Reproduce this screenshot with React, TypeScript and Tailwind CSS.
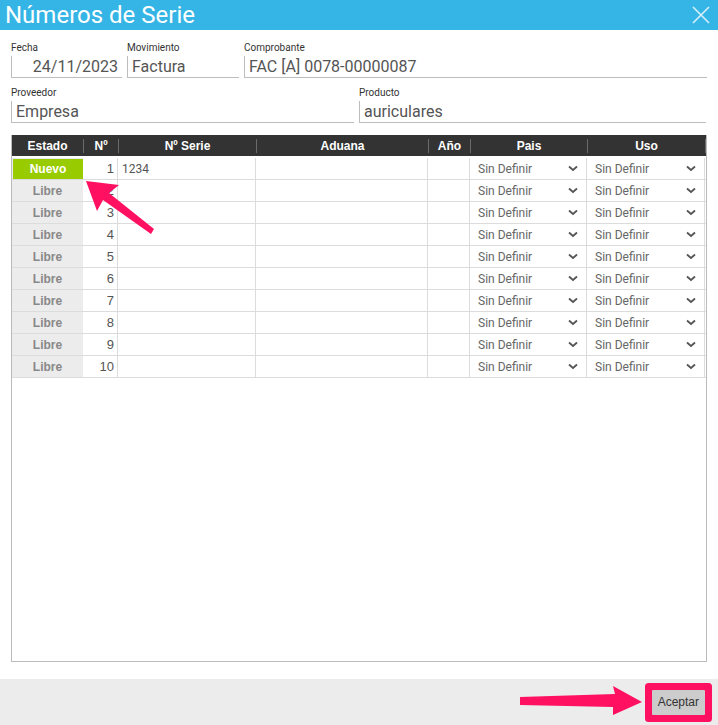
import React from 'react';

const cols = [
  { key: 'estado', label: 'Estado', w: 'w-[71px]' },
  { key: 'n', label: 'Nº', w: 'w-[35px]' },
  { key: 'serie', label: 'Nº Serie', w: 'w-[138px]' },
  { key: 'aduana', label: 'Aduana', w: 'w-[172px]' },
  { key: 'anio', label: 'Año', w: 'w-[42px]' },
  { key: 'pais', label: 'Pais', w: 'w-[117px]' },
  { key: 'uso', label: 'Uso', w: 'w-[118px]' },
];

const rows = Array.from({ length: 10 }, (_, i) => ({
  n: i + 1,
  nuevo: i === 0,
  serie: i === 0 ? '1234' : '',
}));

function Field({ label, value, w, right }: { label: string; value: string; w: string; right?: boolean }) {
  return (
    <div className={`flex flex-col ${w}`}>
      <span className="text-[10px] leading-[12px] text-[#333] h-[14px]">{label}</span>
      <div
        className={`h-[22px] border-l border-b border-[#bdbdbd] text-[16px] leading-[22px] text-[#555] px-[4px] ${right ? 'text-right' : ''}`}
      >
        {value}
      </div>
    </div>
  );
}

function Chevron() {
  return (
    <svg width="10" height="7" viewBox="0 0 10 7" className="shrink-0">
      <path d="M1 1.5 L5 5 L9 1.5" fill="none" stroke="#555" strokeWidth="1.8" />
    </svg>
  );
}

function Select() {
  return (
    <div className="flex items-center justify-between h-full pl-[8px] pr-[8px] text-[12px] text-[#666]">
      <span>Sin Definir</span>
      <Chevron />
    </div>
  );
}

export default function App() {
  return (
    <div className="relative w-[718px] h-[725px] bg-white flex flex-col font-['Roboto',sans-serif] overflow-hidden">
      <div className="h-[30px] bg-[#35b5e5] flex items-center justify-between pl-[5px] pr-[8px] shrink-0">
        <span className="text-white text-[24px] leading-[30px]">Números de Serie</span>
        <svg width="18" height="18" viewBox="0 0 18 18">
          <path d="M1 1 L17 17 M17 1 L1 17" stroke="#d8f0fa" strokeWidth="1.6" />
        </svg>
      </div>

      <div className="flex-1 flex flex-col px-[11px] pt-[12px]">
        <div className="flex gap-[5px]">
          <Field label="Fecha" value="24/11/2023" w="w-[111px]" right />
          <Field label="Movimiento" value="Factura" w="w-[112px]" />
          <Field label="Comprobante" value="FAC [A] 0078-00000087" w="w-[463px]" />
        </div>
        <div className="flex gap-[5px] mt-[9px]">
          <Field label="Proveedor" value="Empresa" w="w-[343px]" />
          <Field label="Producto" value="auriculares" w="w-[347px]" />
        </div>

        <div className="mt-[12px] w-[696px] h-[527px] border border-[#bbb] border-t-0 flex flex-col">
          <div className="h-[21px] bg-[#333] flex items-center font-['Liberation_Sans',Arial,sans-serif] font-bold text-[12px] text-white">
            {cols.map((c, i) => (
              <div
                key={c.key}
                className={`${c.w} h-[14px] flex items-center justify-center ${i > 0 ? 'border-l border-[#6a6a6a]' : ''}`}
              >
                {c.label}
              </div>
            ))}
            <div className="flex-1 h-[14px] border-l border-[#6a6a6a]" />
          </div>
          <div className="pt-[2px]">
            {rows.map((r) => (
              <div key={r.n} className="flex h-[22px] border-b border-[#dcdcdc] text-[12px]">
                <div className="w-[71px] h-full bg-[#ececec] flex">
                  {r.nuevo ? (
                    <div className="flex-1 ml-[1px] mt-[1px] bg-[#99cc00] text-white font-bold flex items-center justify-center font-['Liberation_Sans',Arial,sans-serif]">
                      Nuevo
                    </div>
                  ) : (
                    <div className="flex-1 text-[#888] font-bold flex items-center justify-center font-['Liberation_Sans',Arial,sans-serif]">
                      Libre
                    </div>
                  )}
                </div>
                <div className="w-[35px] h-full flex items-center justify-end pr-[3px] text-[#555] font-['Liberation_Sans',Arial,sans-serif] text-[13px] border-r border-[#dcdcdc]">
                  {r.n}
                </div>
                <div className="w-[138px] h-full flex items-center pl-[4px] text-[#555] border-r border-[#dcdcdc]">
                  {r.serie}
                </div>
                <div className="w-[172px] h-full border-r border-[#dcdcdc]" />
                <div className="w-[42px] h-full border-r border-[#dcdcdc]" />
                <div className="w-[117px] h-full border-r border-[#dcdcdc]">
                  <Select />
                </div>
                <div className="w-[118px] h-full border-r border-[#dcdcdc]">
                  <Select />
                </div>
              </div>
            ))}
          </div>
        </div>
      </div>

      <div className="h-[46px] bg-[#ececec] flex items-center justify-end pr-[13px] shrink-0">
        <button className="h-[25px] px-[6px] bg-[#cccccc] text-[12px] text-[#333] font-['Liberation_Sans',Arial,sans-serif] ring-[7px] ring-[#ff1060] rounded-[1px]">
          Aceptar
        </button>
      </div>

      <svg className="absolute left-0 top-0 pointer-events-none" width="718" height="725" viewBox="0 0 718 725">
        <polygon points="86,181 119,185 109,193 154,229 151,234 103,200 97,211" fill="#ff1060" />
        <polygon points="520,697 615,694 613,686 642,702 613,715 613,707 520,705" fill="#ff1060" />
      </svg>
    </div>
  );
}
